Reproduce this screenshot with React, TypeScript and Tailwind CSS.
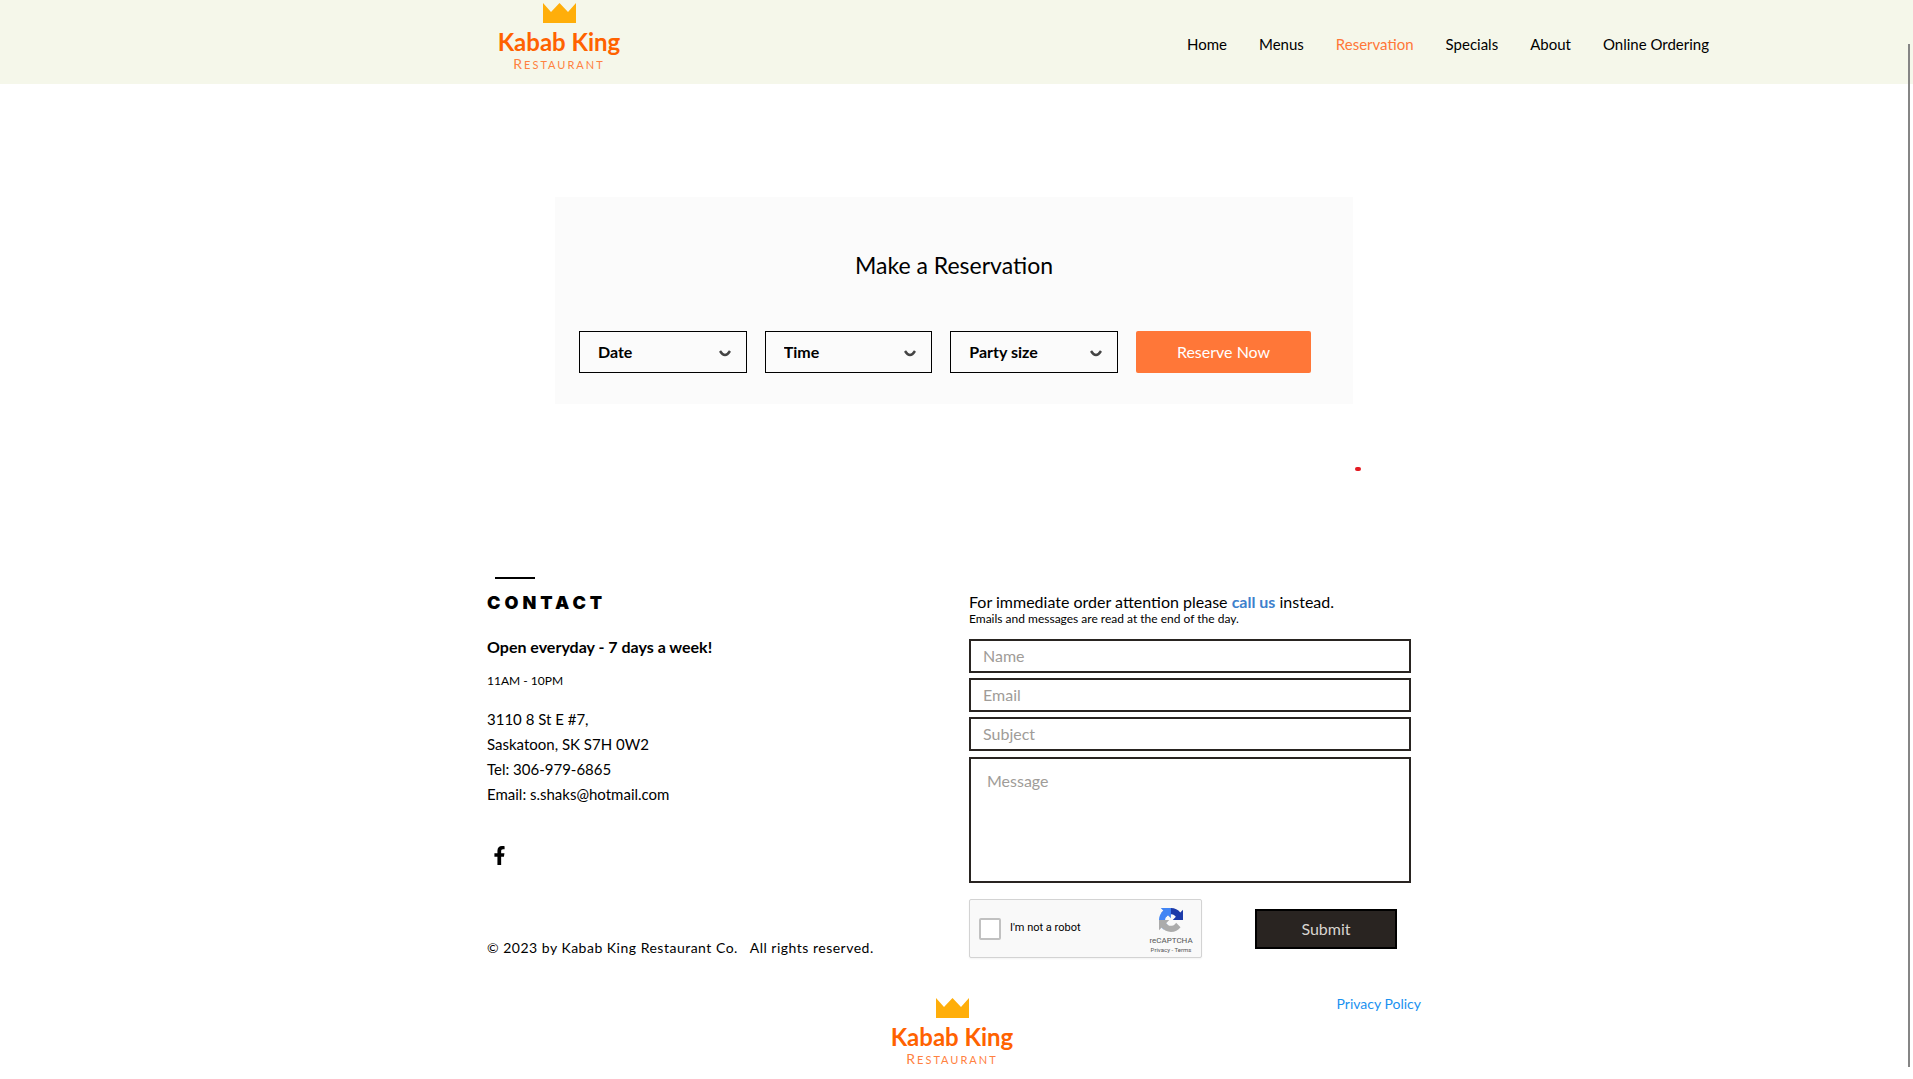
import { FaFacebookF } from "react-icons/fa";

const navItems = ["Home", "Menus", "Reservation", "Specials", "About", "Online Ordering"];
const pickers = [
  { id: "date", label: "Date" },
  { id: "time", label: "Time" },
  { id: "party", label: "Party size" },
];
const fields = [
  { name: "name", type: "text", label: "Name" },
  { name: "email", type: "email", label: "Email" },
  { name: "subject", type: "text", label: "Subject" },
];

function Logo() {
  return (
    <a href="#home" className="flex w-[124px] flex-col items-center">
      <svg viewBox="0 0 33 20" className="h-5 w-[33px]" aria-hidden="true">
        <path d="M0 0 L8 9 L16.5 0 L25 9 L33 0 V20 H0 Z" fill="#ffae0a" />
      </svg>
      <span className="mt-[7px] whitespace-nowrap font-['Lato'] text-2xl font-bold leading-6 text-[#ff6200]">Kabab King</span>
      <span className="whitespace-nowrap font-['Lato'] text-[11px] leading-4 tracking-[2px] text-[#ff8140]">
        <span className="text-sm">R</span>ESTAURANT
      </span>
    </a>
  );
}

function RecaptchaMark() {
  return (
    <svg viewBox="0 0 64 64" className="size-6" aria-hidden="true">
      <path fill="#1c3aa9" d="M64 31.955a33 33 0 0 0-.03-1.37V4.687l-7.16 7.16C50.95 4.674 42.033.093 32.046.093c-10.393 0-19.626 4.96-25.458 12.64l11.736 11.86a15.55 15.55 0 0 1 4.754-5.334c2.05-1.6 4.952-2.906 8.968-2.906.485 0 .86.057 1.135.163 4.976.393 9.288 3.14 11.828 7.124l-8.307 8.307z" />
      <path fill="#4285f4" d="M31.862.094a33 33 0 0 0-1.37.03H4.594l7.16 7.16C4.58 13.147 0 22.06 0 32.05c0 10.393 4.96 19.626 12.64 25.458L24.5 45.772a15.55 15.55 0 0 1-5.334-4.754c-1.6-2.05-2.906-4.952-2.906-8.968 0-.485.057-.86.163-1.135.393-4.976 3.14-9.288 7.124-11.828l8.307 8.307z" />
      <path fill="#ababab" d="M.001 32.045a33 33 0 0 0 .03 1.37v25.898l7.16-7.16c5.862 7.173 14.777 11.753 24.765 11.753 10.393 0 19.626-4.96 25.458-12.64l-11.736-11.86a15.55 15.55 0 0 1-4.754 5.334c-2.05 1.6-4.952 2.906-8.968 2.906-.485 0-.86-.057-1.135-.163-4.976-.393-9.288-3.14-11.828-7.124l8.307-8.307z" />
    </svg>
  );
}

function Reservation() {
  return (
    <section className="mx-auto mt-[113px] h-[207px] w-[798px] max-w-full bg-[#fbfbfb] px-6">
      <h1 className="pt-[52px] text-center text-[23px] leading-8">Make a Reservation</h1>
      <form className="mt-[50px] flex gap-[18px] pr-[18px]">
        {pickers.map((p) => (
          <div key={p.id} className="relative flex-1">
            <select
              id={p.id}
              aria-label={p.label}
              className="h-[42px] w-full appearance-none border border-black bg-transparent px-[18px] text-base font-bold"
            >
              <option>{p.label}</option>
            </select>
            <svg viewBox="0 0 12 8" className="pointer-events-none absolute top-[19px] right-4 h-2 w-3" aria-hidden="true">
              <path d="M1 1 Q6 9 11 1" fill="none" stroke="#444" strokeWidth="2.4" />
            </svg>
          </div>
        ))}
        <button type="button" className="h-[42px] w-[175px] rounded-xs bg-[#ff7738] text-base text-white">
          Reserve Now
        </button>
      </form>
    </section>
  );
}

function Contact() {
  return (
    <section className="w-[482px] text-[15px]">
      <hr className="ml-2 w-10 border-t-2 border-black" />
      <h2 className="mt-3 font-['Inter'] text-lg leading-6 font-black tracking-[4px]">CONTACT</h2>
      <p className="mt-5 text-base leading-6 font-bold">Open everyday - 7 days a week!</p>
      <p className="mt-3 text-xs leading-5">11AM - 10PM</p>
      <address className="mt-4 leading-[25px] not-italic">
        3110 8 St E #7,
        <br />
        Saskatoon, SK S7H 0W2
        <br />
        Tel: 306-979-6865
        <br />
        Email: s.shaks@hotmail.com
      </address>
      <a href="#facebook" aria-label="Facebook" className="mt-[38px] ml-[2px] flex size-5 items-center justify-center">
        <FaFacebookF className="size-[19px]" />
      </a>
      <p className="mt-[71px] text-sm leading-6 tracking-[0.5px] whitespace-pre">© 2023 by Kabab King Restaurant Co.   All rights reserved.</p>
    </section>
  );
}

function MessageForm() {
  return (
    <form className="w-[452px] pt-4">
      <p className="text-base leading-[18px] whitespace-nowrap">
        For immediate order attention please <a href="#call" className="font-bold text-[#3d80cc]">call us</a> instead.
      </p>
      <p className="text-xs leading-4">Emails and messages are read at the end of the day.</p>
      <div className="mt-3 flex flex-col">
        {fields.map((f) => (
          <input
            key={f.name}
            type={f.type}
            name={f.name}
            aria-label={f.label}
            placeholder={f.label}
            className="mb-[5px] h-[34px] w-[442px] border-2 border-[#292421] px-3 pb-0.5 text-base placeholder:text-[#a09c98]"
          />
        ))}
        <textarea
          name="message"
          aria-label="Message"
          placeholder="Message"
          className="mt-px h-[126px] w-[442px] resize-none border-2 border-[#292421] px-4 py-2.5 text-base placeholder:text-[#a09c98]"
        />
      </div>
      <div className="mt-4 flex gap-[53px]">
        <div className="flex h-[59px] w-[233px] items-center rounded-xs border border-[#d3d3d3] bg-[#f9f9f9] pr-2 pl-[9px] shadow-xs">
          <label className="flex flex-1 items-center gap-[9px] font-['Roboto'] text-[11px]">
            <input type="checkbox" className="size-[22px] appearance-none rounded-xs border-2 border-[#c1c1c1] bg-white" />
            I'm not a robot
          </label>
          <div className="flex w-11 flex-col items-center pt-1 font-['Roboto'] text-[#555]">
            <RecaptchaMark />
            <span className="mt-1 text-[8px] leading-[10px]">reCAPTCHA</span>
            <span className="text-[6px] leading-2 whitespace-nowrap">
              <a href="#privacy">Privacy</a> - <a href="#terms">Terms</a>
            </span>
          </div>
        </div>
        <button type="button" className="mt-[10px] h-10 w-[142px] border-2 border-black bg-[#292421] text-base text-[#d8d4d0]">
          Submit
        </button>
      </div>
      <a href="#privacy-policy" className="mt-[34px] block text-right text-sm leading-6 text-[#1a91f0]">Privacy Policy</a>
    </form>
  );
}

export default function App() {
  return (
    <div className="relative min-h-screen overflow-hidden bg-white pr-[5px] font-['Lato',sans-serif] text-black">
      <header className="-mr-[5px] bg-[#f5f7ea] pr-[5px]">
        <div className="mx-auto flex h-[84px] w-[1510px] max-w-full items-start justify-between pl-[298px]">
          <div className="pt-[3px]"><Logo /></div>
          <nav className="flex gap-8 pt-8 text-[15px] leading-6">
            {navItems.map((item) => (
              <a key={item} href={"#" + item} className={item === "Reservation" ? "text-[#ff7738]" : ""}>{item}</a>
            ))}
          </nav>
        </div>
      </header>
      <main>
        <Reservation />
        <div className="mx-auto w-[814px] max-w-full pt-[63px]">
          <div className="ml-auto h-1 w-1.5 rounded-full bg-[#e31b23]" />
        </div>
      </main>
      <footer className="mx-auto w-[934px] max-w-full pt-[106px]">
        <div className="flex">
          <Contact />
          <MessageForm />
        </div>
        <div className="-mt-[18px] flex pl-[403px]"><Logo /></div>
      </footer>
      <div className="absolute top-11 right-[3px] bottom-3 w-0.5 bg-[#858585]" />
    </div>
  );
}
